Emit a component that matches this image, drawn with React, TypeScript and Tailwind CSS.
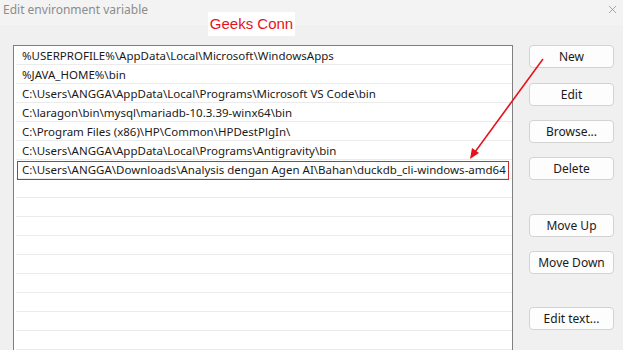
import { X } from "lucide-react"

const paths = [
  "%USERPROFILE%\\AppData\\Local\\Microsoft\\WindowsApps",
  "%JAVA_HOME%\\bin",
  "C:\\Users\\ANGGA\\AppData\\Local\\Programs\\Microsoft VS Code\\bin",
  "C:\\laragon\\bin\\mysql\\mariadb-10.3.39-winx64\\bin",
  "C:\\Program Files (x86)\\HP\\Common\\HPDestPlgIn\\",
  "C:\\Users\\ANGGA\\AppData\\Local\\Programs\\Antigravity\\bin",
  "C:\\Users\\ANGGA\\Downloads\\Analysis dengan Agen AI\\Bahan\\duckdb_cli-windows-amd64",
]

const rows = [...paths, ...Array(10).fill("")]

function Btn({ label, className = "" }: { label: string; className?: string }) {
  return (
    <button
      className={`w-[85px] h-[23px] rounded-[4px] border border-[#d3d3d3] bg-[#fdfdfd] text-[12px] text-[#1a1a1a] leading-none ${className}`}
    >
      {label}
    </button>
  )
}

export default function App() {
  return (
    <div
      className="relative w-[623px] h-[350px] overflow-hidden bg-[#f0f0f0] text-[#1a1a1a]"
      style={{ fontFamily: '"Noto Sans", "Open Sans", sans-serif' }}
    >
      {/* Title bar */}
      <div className="flex items-center justify-between h-[25px] bg-[#f3f3f3] pl-[3px] pr-[4px]">
        <span className="text-[12px] text-[#8c8c8c] -mt-[6px]">Edit environment variable</span>
        <X className="w-[13px] h-[13px] text-[#7a7a7a] -mt-[6px]" strokeWidth={1.2} />
      </div>

      <div className="flex pl-[13px] pt-[20px]">
        {/* List box */}
        <div className="w-[500px] h-[330px] border border-[#7f7f7f] bg-white shrink-0">
          {rows.map((p, i) => (
            <div
              key={i}
              className="relative ml-[2px] h-[19px] border-b border-[#ebebeb] flex items-center pl-[6px] pt-[1px] text-[11.5px] whitespace-nowrap"
            >
              {p}
              {i === 6 && (
                <div className="absolute left-[1px] right-[3px] top-[1px] h-[19px] border border-[#d42a2a]" />
              )}
            </div>
          ))}
        </div>

        {/* Buttons */}
        <div className="flex flex-col ml-[16px]">
          <Btn label="New" />
          <Btn label="Edit" className="mt-[15px]" />
          <Btn label="Browse..." className="mt-[14px]" />
          <Btn label="Delete" className="mt-[14px]" />
          <Btn label="Move Up" className="mt-[34px]" />
          <Btn label="Move Down" className="mt-[14px]" />
          <Btn label="Edit text..." className="mt-[33px]" />
        </div>
      </div>

      {/* Watermark */}
      <div
        className="absolute left-[208px] top-[12px] w-[87px] h-[24px] bg-white flex items-center justify-center text-[15px] text-[#e5111d]"
        style={{ fontFamily: '"Liberation Sans", Arial, sans-serif' }}
      >
        Geeks Conn
      </div>

      {/* Annotation arrow */}
      <svg className="absolute left-0 top-0 pointer-events-none" width="623" height="350">
        <line x1="543" y1="59" x2="475" y2="152" stroke="#e5111d" strokeWidth="1.5" />
        <polygon points="470,159 472,148 479,153" fill="#e5111d" />
      </svg>
    </div>
  )
}
